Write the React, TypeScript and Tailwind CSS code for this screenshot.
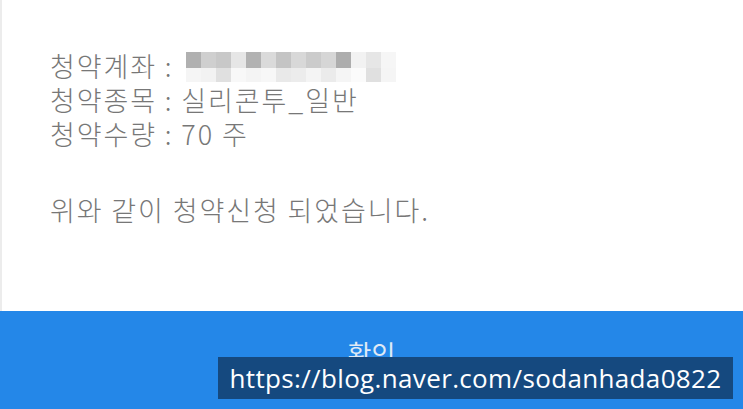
const row1 = ['#b0b0b0', '#cfcfcf', '#c8c8c8', '#e6e6e6', '#b2b2b2', '#dadada', '#c4c4c4', '#d8d8d8', '#cbcbcb', '#d6d6d6', '#adadad', '#f2f2f2', '#e6e6e6', '#f6f6f6'];
const row2 = ['#f5f5f5', '#f2f2f2', '#e0e0e0', '#f8f8f8', '#f4f4f4', '#f7f7f7', '#e9e9e9', '#ececec', '#f4f4f4', '#ebebeb', '#f5f5f5', '#fbfbfb', '#e0e0e0', '#f5f5f5'];

// 모자이크 처리된 계좌번호
function Mosaic() {
  return (
    <div className="flex flex-col">
      <div className="flex">
        {row1.map((c, i) => (
          <div key={i} className="h-[16px] w-[15px]" style={{ backgroundColor: c }} />
        ))}
      </div>
      <div className="flex">
        {row2.map((c, i) => (
          <div key={i} className="h-[14px] w-[15px]" style={{ backgroundColor: c }} />
        ))}
      </div>
    </div>
  );
}

export default function App() {
  return (
    <div className="relative flex h-[409px] w-[743px] flex-col overflow-hidden bg-white font-['Noto_Sans_CJK_KR',sans-serif]">
      <div className="flex h-[311px] flex-col border-l-2 border-[#ececec] pl-[48px] pt-[49px] text-[27px] font-light leading-[34px] tracking-[1.9px] text-[#777777]">
        <div className="flex items-center">
          <span>청약계좌 :</span>
          <div className="ml-[13px] mt-[2px]">
            <Mosaic />
          </div>
        </div>
        <div>청약종목 : 실리콘투_일반</div>
        <div>청약수량 : 70 주</div>
        <div className="mt-[42px]">위와 같이 청약신청 되었습니다.</div>
      </div>
      <button className="flex flex-1 items-start justify-center bg-[#2487e8] pt-[22px] text-[26px] text-[#dfe9f5]">
        확인
      </button>
      <div className="absolute left-[218px] top-[357px] flex h-[42px] w-[515px] items-center justify-center bg-[#15497f] font-['Open_Sans',sans-serif] text-[26px] tracking-[0.35px] text-white">
        https://blog.naver.com/sodanhada0822
      </div>
    </div>
  );
}
